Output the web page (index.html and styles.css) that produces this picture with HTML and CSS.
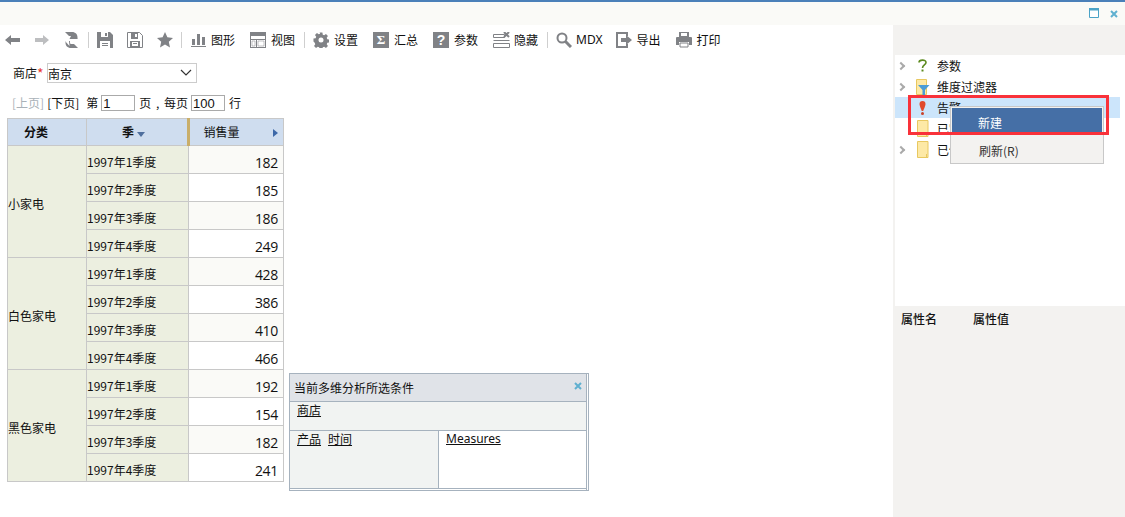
FILE: index.html
```html
<!DOCTYPE html>
<html lang="zh">
<head>
<meta charset="utf-8">
<title>多维分析</title>
<link rel="stylesheet" href="styles.css">
</head>
<body>
<div class="app">
  <div class="topline"></div>
  <div class="titlebar">
    <svg class="win-icon" width="10" height="10" viewBox="0 0 10 10"><path d="M.5.5h9v9h-9z" fill="#fff" stroke="#4ba3c7"/><path d="M0 0h10v2.500H0z" fill="#4ba3c7"/></svg>
    <svg class="win-close" width="8" height="8" viewBox="0 0 8 8"><path d="M1 1l6 6M7 1L1 7" stroke="#5fb0d0" stroke-width="2"/></svg>
  </div>
  <div class="main">
    <div class="content">
      <div class="toolbar">
        <span class="tool t-back"><svg width="15" height="12" viewBox="0 0 15 12"><path d="M0 6l6-5v3h9v4H6v3z" fill="#808286"/></svg></span>
        <span class="tool t-fwd"><svg width="14" height="12" viewBox="0 0 14 12"><path d="M14 6L8 1v3H0v4h8v3z" fill="#bdbec0"/></svg></span>
        <span class="tool t-refresh"><svg width="13" height="16" viewBox="0 0 13 16"><path d="M0 0h7c3.500 0 5.500 2.300 5.500 5.500V7H8V5.500C8 4.500 7.500 4 6.500 4H4z" fill="#808286"/><path d="M4 9H0l4.500 5zM13 16H6c-3.500 0-5.500-2.300-5.500-5.500V9H5v1.500c0 1 .5 1.500 1.500 1.500H9z" fill="#808286"/><path d="M5.500 8h8L8 3z" fill="#808286" transform="translate(-1 -1)"/></svg></span>
        <i class="sep s1"></i>
        <span class="tool"><svg width="16" height="16" viewBox="0 0 16 16"><path d="M0 0h13l3 3v13H0z" fill="#808286"/><path d="M4 0h7v5H4zM3 9h10v7H3z" fill="#fff"/><path d="M8 1h2v3H8zM5 11h6v1H5zM5 13h6v1H5z" fill="#808286"/></svg></span>
        <span class="tool t-saveas"><svg width="16" height="16" viewBox="0 0 16 16"><path d="M.5.500h12l3 3v12H.5z" fill="#fff" stroke="#808286"/><path d="M4 1h7v6H4zM3 9h10v6H3z" fill="#808286"/><path d="M8 2h2v3H8zM5 10h6v4H5z" fill="#fff"/><path d="M6 11h4v1H6z" fill="#808286"/></svg></span>
        <span class="tool t-star"><svg width="16" height="16" viewBox="0 0 16 16"><path d="M8 0l2.400 5.300 5.600.6-4.200 3.800 1.200 5.700L8 12.500 3 15.400l1.200-5.700L0 5.900l5.600-.6z" fill="#808286"/></svg></span>
        <i class="sep s2"></i>
        <span class="tool t-chart"><svg width="15" height="14" viewBox="0 0 15 14"><path d="M1 6h3v6H1zM6 1h3v11H6zM11 4h3v8h-3zM0 13h15v1H0z" fill="#808286"/></svg><b>图形</b></span>
        <span class="tool t-view"><svg width="16" height="16" viewBox="0 0 16 16"><path d="M0 0h16v16H0z" fill="#808286"/><path d="M1 4h14v3H1zM1 8h5v7H1zM7 8h8v7H7z" fill="#fff"/><path d="M2 9h3v5H2zM8 9h6v5H8z" fill="#fff" stroke="#808286" stroke-width=".5"/></svg><b>视图</b></span>
        <i class="sep s3"></i>
        <span class="tool t-gear"><svg width="16" height="16" viewBox="0 0 16 16"><path d="M6.500 0h3l.4 2.300 1.500.6 1.900-1.300 2.100 2.100-1.300 1.900.6 1.500 2.300.4v3l-2.300.4-.6 1.500 1.300 1.900-2.100 2.100-1.900-1.300-1.500.6-.4 2.300h-3l-.4-2.300-1.500-.6-1.900 1.300-2.100-2.100 1.300-1.900-.6-1.500L0 9.500v-3l2.300-.4.6-1.500-1.300-1.900 2.100-2.100 1.900 1.300 1.500-.6z" fill="#808286" transform="scale(.94) translate(.5 .5)"/><circle cx="8" cy="8" r="2.500" fill="#fff"/></svg><b>设置</b></span>
        <span class="tool t-sum"><span class="box">Σ</span><b>汇总</b></span>
        <span class="tool t-param"><span class="box boxq">?</span><b>参数</b></span>
        <span class="tool t-hide"><svg width="17" height="16" viewBox="0 0 17 16"><path d="M.5 2.500h11v3H.5zM.5 11.500h16v4H.5z" fill="#fff" stroke="#808286"/><path d="M.5 8.500h16" stroke="#808286"/><path d="M11 0l5 5M16 0l-5 5" stroke="#808286" stroke-width="2"/></svg><b>隐藏</b></span>
        <i class="sep s4"></i>
        <span class="tool t-mdx"><svg width="16" height="16" viewBox="0 0 16 16"><circle cx="6" cy="6" r="4.500" fill="#fff" stroke="#808286" stroke-width="2"/><path d="M9.500 9.500L15 15" stroke="#808286" stroke-width="3"/></svg><b class="b-mdx">MDX</b></span>
        <span class="tool t-export"><svg width="16" height="16" viewBox="0 0 16 16"><path d="M11 4V1H1v14h10v-3" fill="none" stroke="#808286" stroke-width="2"/><path d="M5 6h5V3l6 5-6 5v-3H5z" fill="#808286"/></svg><b>导出</b></span>
        <span class="tool t-print"><svg width="16" height="16" viewBox="0 0 16 16"><path d="M3 0h10v5H3zM1 5h14a1 1 0 0 1 1 1v7h-3v-3H3v3H0V6a1 1 0 0 1 1-1z" fill="#808286"/><path d="M5 1h6v3H5z" fill="#fff"/><path d="M4 11h8v4H4z" fill="#fff" stroke="#808286"/></svg><b>打印</b></span>
      </div>

      <div class="filter">
        <span>商店</span><span class="req">*</span>
        <div class="select"><span>南京</span><svg width="12" height="7" viewBox="0 0 12 7"><path d="M1 1l5 5 5-5" fill="none" stroke="#333" stroke-width="1.200"/></svg></div>
      </div>

      <div class="pager">
        <span class="muted">[上页]</span><span class="next">[下页]</span><span class="di">第</span>
        <span class="pg pg1">1</span><span class="ye">页 , 每页</span><span class="pg pg2">100</span><span class="hang">行</span>
      </div>

      <table class="grid">
        <colgroup><col class="c1"><col class="c2"><col class="c3"></colgroup>
        <thead>
          <tr>
            <th class="cathead">分类</th>
            <th class="season"><span>季</span><i class="down"></i></th>
            <th class="sales"><span>销售量</span><i class="right"></i></th>
          </tr>
        </thead>
        <tbody>
          <tr class="odd"><td rowspan="4" class="cat">小家电</td><td class="q">1997年1季度</td><td class="n">182</td></tr>
          <tr><td class="q">1997年2季度</td><td class="n">185</td></tr>
          <tr class="odd"><td class="q">1997年3季度</td><td class="n">186</td></tr>
          <tr><td class="q">1997年4季度</td><td class="n">249</td></tr>
          <tr class="odd"><td rowspan="4" class="cat">白色家电</td><td class="q">1997年1季度</td><td class="n">428</td></tr>
          <tr><td class="q">1997年2季度</td><td class="n">386</td></tr>
          <tr class="odd"><td class="q">1997年3季度</td><td class="n">410</td></tr>
          <tr><td class="q">1997年4季度</td><td class="n">466</td></tr>
          <tr class="odd"><td rowspan="4" class="cat">黑色家电</td><td class="q">1997年1季度</td><td class="n">192</td></tr>
          <tr><td class="q">1997年2季度</td><td class="n">154</td></tr>
          <tr class="odd"><td class="q">1997年3季度</td><td class="n">182</td></tr>
          <tr><td class="q">1997年4季度</td><td class="n">241</td></tr>
        </tbody>
      </table>

      <div class="dialog">
        <div class="d-head"><span>当前多维分析所选条件</span><svg width="8" height="8" viewBox="0 0 8 8"><path d="M1 1l6 6M7 1L1 7" stroke="#5fb0d0" stroke-width="2"/></svg></div>
        <div class="d-slicer"><u>商店</u></div>
        <div class="d-axes">
          <div class="d-rows"><u>产品</u><u>时间</u></div>
          <div class="d-cols"><u>Measures</u></div>
        </div>
      </div>
    </div>

    <aside class="side">
      <div class="side-top"></div>
      <div class="tree">
        <div class="node">
          <i class="chev"></i>
          <span class="ico"><svg width="9" height="13" viewBox="0 0 9 13"><path d="M1 3.500C1 .5 8 .2 8 3.500c0 2.500-3.500 2.500-3.500 5.500" fill="none" stroke="#5c8a1e" stroke-width="1.600"/><path d="M3.500 10.500h2v2h-2z" fill="#5c8a1e"/></svg></span>
          <span>参数</span>
        </div>
        <div class="node">
          <i class="chev"></i>
          <span class="ico"><svg width="15" height="16" viewBox="0 0 15 16"><path d="M1.500.5h10v15h-10z" fill="#fde9a6" stroke="#e8c860"/><path d="M3 6h11.500L10 11v5H7.500v-5z" fill="#4b9cd6"/></svg></span>
          <span>维度过滤器</span>
        </div>
        <div class="node on">
          <i class="chev none"></i>
          <span class="ico"><svg width="7" height="14" viewBox="0 0 7 14"><path d="M.5 3a3 3 0 0 1 6 0c0 2-2 6-2.300 7H2.800C2.500 9 .5 5 .5 3z" fill="#e0492c"/><circle cx="3.500" cy="12.500" r="1.500" fill="#c9412a"/></svg></span>
          <span>告警</span>
        </div>
        <div class="node">
          <i class="chev none"></i>
          <span class="ico"><svg width="12" height="17" viewBox="0 0 12 17"><path d="M.5.500h10.500v16H.5z" fill="#fde9a6" stroke="#e8c860"/><path d="M9.500 13v3" stroke="#e8c860"/></svg></span>
          <span>已定义</span>
        </div>
        <div class="node">
          <i class="chev"></i>
          <span class="ico"><svg width="12" height="17" viewBox="0 0 12 17"><path d="M.5.500h10.500v16H.5z" fill="#fde9a6" stroke="#e8c860"/><path d="M9.500 13v3" stroke="#e8c860"/></svg></span>
          <span>已保存</span>
        </div>
      </div>
      <div class="props"><b>属性名</b><b>属性值</b></div>

      <div class="ctx">
        <div class="ctx-item sel">新建</div>
        <div class="ctx-item">刷新(R)</div>
      </div>
      <div class="redbox"></div>
    </aside>
  </div>
</div>
</body>
</html>
```
FILE: styles.css
```css
* { box-sizing: border-box; }
html, body { margin: 0; padding: 0; }
body {
  width: 1125px; height: 517px; overflow: hidden; background: #fff; color: #111;
  font: 12px/16px "Noto Sans CJK SC", "Liberation Sans", sans-serif;
}
.app { display: flex; flex-direction: column; height: 517px; }
.topline { height: 2px; background: #4a80b9; flex: none; }
.titlebar {
  height: 23px; flex: none; background: #fafaf7;
  display: flex; align-items: flex-start; justify-content: flex-end; padding: 6px 7px 0 0; gap: 11px;
}
.win-close { margin-top: 2px; }
.main { flex: 1; display: flex; min-height: 0; }
.content { position: relative; width: 893px; flex: none; }

.toolbar { height: 30px; display: flex; align-items: center; padding-left: 5px; }
.tool { display: inline-flex; align-items: center; flex: none; }
.tool svg { display: block; flex: none; }
.tool b { font-weight: 400; margin-left: 5px; color: #111; white-space: nowrap; }
.tool b.b-mdx { margin-left: 4px; font-family: "Noto Sans", "Liberation Sans", sans-serif; }
.t-fwd { margin-left: 15px; }
.t-refresh { margin-left: 16px; }
.sep { display: block; width: 1px; height: 16px; background: #cfcfcf; flex: none; }
.s1 { margin: 0 8px 0 10px; }
.t-saveas, .t-star { margin-left: 14px; }
.s2 { margin: 0 9px 0 8px; }
.t-view { margin-left: 15px; }
.s3 { margin: 0 8px 0 9px; }
.t-sum, .t-param, .t-hide { margin-left: 15px; }
.t-hide b { margin-left: 4px; }
.box {
  width: 16px; height: 16px; background: #808286; color: #fff; display: block;
  font: 700 13px/16px "Liberation Serif", serif; text-align: center;
}
.boxq { font: 700 14px/16px "Liberation Sans", sans-serif; }
.s4 { margin: 0 8px 0 9px; }
.t-export { margin-left: 13px; }
.t-print { margin-left: 15px; }

.filter { display: flex; align-items: center; height: 20px; margin-top: 8px; padding-left: 13px; }
.req { color: #e8362f; width: 10px; font-size: 14px; }
.select {
  width: 150px; height: 20px; border: 1px solid #ccc; background: #fff;
  display: flex; align-items: center; justify-content: space-between; padding: 1px 2px 0 0;
}
.select svg { margin-right: 2px; margin-top: -2px; }

.pager { display: flex; align-items: center; height: 18px; margin-top: 11px; padding-left: 12px; }
.muted { color: #a9b1b8; }
.next { margin-left: 3px; }
.di { margin-left: 7px; }
.pg {
  display: block; height: 16px; border: 1px solid #aaa; padding-left: 1px; font-size: 13px; line-height: 15px; font-family: "Liberation Sans", sans-serif;
}
.pg1 { width: 34px; margin-left: 3px; }
.pg2 { width: 34px; margin-left: 3px; }
.ye { margin-left: 4px; white-space: nowrap; word-spacing: 2px; }
.hang { margin-left: 4px; }

.grid { border-collapse: collapse; table-layout: fixed; width: 277px; margin: 6px 0 0 7px; }
.c1 { width: 79px; } .c2 { width: 102px; } .c3 { width: 95px; }
.grid th, .grid td { border: 1px solid #c8c8c8; padding: 0; }
.grid th { height: 27px; background: #cfddef; font-weight: 700; text-align: center; color: #111; position: relative; }
.cathead { padding-right: 22px !important; }
.season { border-right: 3px solid #c9ae6a !important; padding-right: 7px !important; }
.down {
  display: inline-block; width: 0; height: 0; margin-left: 3px; vertical-align: 0;
  border: 4px solid transparent; border-top: 5px solid #4f6f9e; border-bottom: 0;
}
.sales { font-weight: 400 !important; padding-right: 30px !important; }
.right {
  position: absolute; right: 5px; top: 10px; width: 0; height: 0;
  border: 4px solid transparent; border-left: 5px solid #3d68a8; border-right: 0;
}
.grid td { height: 28px; }
.cat { background: #ecefe0; text-align: left; padding-top: 5px !important; }
.q { background: #ecefe0; padding-top: 5px !important; }
.n { text-align: right; padding-right: 5px !important; padding-top: 6px !important; font-size: 14px; line-height: 20px; letter-spacing: -.3px; background: #fff; font-family: "Open Sans", "Liberation Sans", sans-serif; }
.odd .n { background: #fafaf7; }

.dialog {
  position: absolute; left: 289px; top: 348px; width: 300px; height: 118px;
  border: 1px solid #a6b2be; border-right-width: 3px; border-right-style: double; background: #fff;
  display: flex; flex-direction: column;
}
.d-head {
  height: 28px; background: #e0e3e8; border-bottom: 1px solid #a6b2be; flex: none;
  display: flex; align-items: center; justify-content: space-between; padding: 0 4px 0 4px;
}
.d-head svg { margin-top: -3px; }
.d-slicer { height: 29px; background: #f1f3f2; border-bottom: 1px solid #a6b2be; padding-left: 7px; flex: none; line-height: 16px; }
.d-axes { display: flex; height: 58px; border-bottom: 1px solid #a6b2be; flex: none; }
.d-rows { width: 149px; background: #f1f3f2; border-right: 1px solid #a6b2be; padding-left: 7px; display: flex; gap: 7px; align-items: flex-start; }
.d-cols { flex: 1; padding-left: 7px; font-family: "Noto Sans", "Liberation Sans", sans-serif; }

.side { position: relative; flex: 1; padding-left: 2px; background: #f3f2f0; display: flex; flex-direction: column; }
.side-top { height: 30px; flex: none; margin-left: -2px; }
.tree { height: 251px; background: #fff; flex: none; }
.node { display: flex; align-items: center; height: 21px; margin-right: 5px; white-space: nowrap; }
.node.on { background: #cce5fb; }
.chev { display: block; width: 6px; height: 6px; margin-left: 3px; border-top: 2px solid #aaa; border-right: 2px solid #aaa; transform: rotate(45deg); flex: none; }
.chev.none { visibility: hidden; }
.ico { width: 15px; display: flex; justify-content: center; margin-left: 11px; margin-right: 7px; flex: none; }
.props { display: flex; gap: 36px; padding: 5px 0 0 6px; }
.props b { font-weight: 500; }

.ctx {
  position: absolute; left: 57px; top: 81px; width: 154px; height: 58px; background: #f3f2f0;
  border: 1px solid #c8c8c8; display: flex; flex-direction: column;
}
.ctx-item { height: 28px; padding: 2px 0 0 28px; display: flex; align-items: center; color: #333; }
.ctx-item.sel { background: #456fa6; color: #fff; height: 28px; margin: 1px; padding-left: 26px; width: 150px; }
.redbox { position: absolute; left: 15px; top: 70px; width: 201px; height: 40px; border: 3px solid #f9323a; pointer-events: none; }
```
